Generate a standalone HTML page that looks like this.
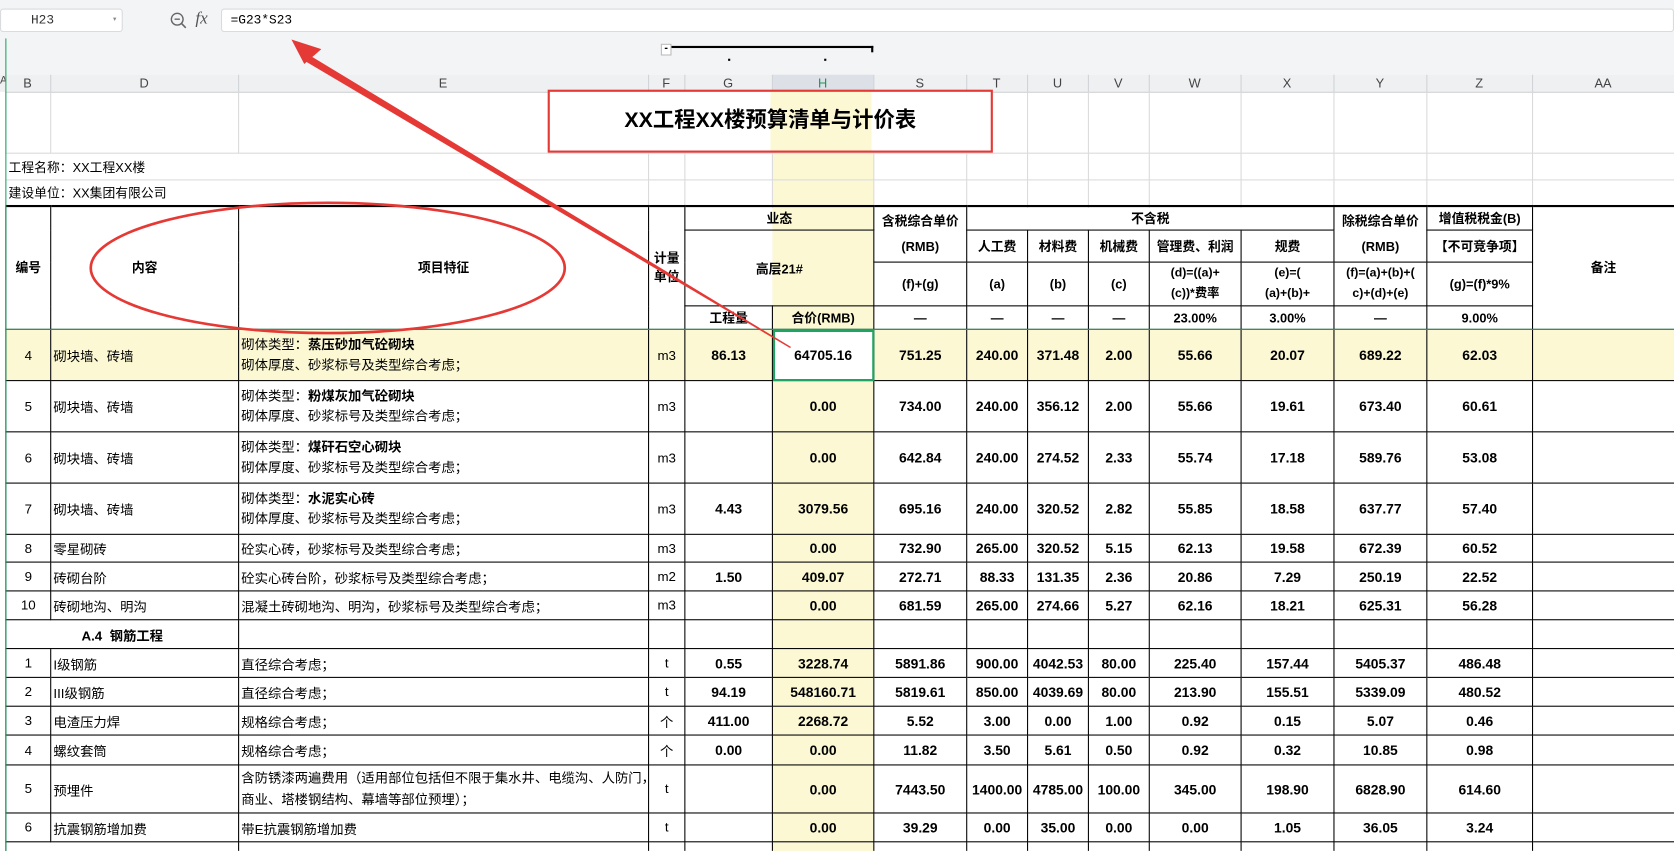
<!DOCTYPE html>
<html><head><meta charset="utf-8"><style>
*{box-sizing:border-box;margin:0;padding:0}
html,body{width:1674px;height:851px;overflow:hidden;background:#fff}
#w{position:absolute;left:0;top:0;width:1568px;height:797px;transform:scale(1.0676);transform-origin:0 0;font-family:"Liberation Sans","Noto Sans CJK SC",sans-serif;color:#000;font-size:12px;overflow:hidden}
.top{position:absolute;left:0;top:0;width:1568px;height:70px;background:#f3f4f6}
.nb{position:absolute;left:0;top:8px;width:115px;height:22px;background:#fff;border:1px solid #d9dbde;border-radius:3px;font-family:"Liberation Mono",monospace;font-size:12px;line-height:20px;padding-left:28px;color:#333}
.fb{position:absolute;left:207px;top:8px;width:1361px;height:22px;background:#fff;border:1px solid #d9dbde;border-radius:3px;font-family:"Liberation Mono",monospace;font-size:12px;line-height:20px;padding-left:8px}
table{border-collapse:collapse;table-layout:fixed;position:absolute;left:5px;width:1563px}
td{overflow:hidden;white-space:nowrap;text-align:center;vertical-align:middle;padding:0 2px}
#ch{top:70px;background:#eef0f2}
#ch td{height:16px;border-right:1px solid #d0d3d8;border-bottom:1px solid #c8ccd2;color:#444;font-size:12px}
#g{top:86px}
#g td{border:1px solid #dadada}
#g td.k{border:1px solid #000}
.y{background:#fbf8d3}
.l{text-align:left}
.b{font-weight:bold}
.n td{font-weight:bold;font-size:13px}
.n td.p{font-weight:normal;font-size:12.5px}
.r4 td{background:#fbf8d3}
</style></head><body><div id="w">
<div class="top">
<div class="nb">H23<span style="position:absolute;left:104px;top:0;font-size:8px;color:#888">▾</span></div>
<svg style="position:absolute;left:159px;top:11px" width="16" height="16"><circle cx="7" cy="7" r="5.5" fill="none" stroke="#666" stroke-width="1.3"/><line x1="4.5" y1="7" x2="9.5" y2="7" stroke="#666" stroke-width="1.3"/><line x1="11" y1="11" x2="15" y2="15" stroke="#666" stroke-width="1.5"/></svg>
<span style="position:absolute;left:183px;top:9px;font-family:'Liberation Serif',serif;font-style:italic;font-size:16px;color:#555">fx</span>
<div class="fb">=G23*S23</div>
<div style="position:absolute;left:619px;top:41px;width:10px;height:11px;background:#fff;border:1px solid #bbb;font-size:10px;line-height:7px;text-align:center;font-weight:bold">-</div>
<div style="position:absolute;left:629px;top:43px;width:189px;height:2px;background:#000"></div>
<div style="position:absolute;left:816px;top:43px;width:2px;height:6px;background:#000"></div>
<div style="position:absolute;left:682px;top:55px;width:2px;height:2px;background:#000"></div>
<div style="position:absolute;left:772px;top:55px;width:2px;height:2px;background:#000"></div>
</div>
<div style="position:absolute;left:0;top:70px;width:5px;height:16px;background:#eef0f2;font-size:10px;color:#444">A</div>
<table id="ch"><colgroup><col style="width:42px"><col style="width:176px"><col style="width:384px"><col style="width:34px"><col style="width:82px"><col style="width:95px"><col style="width:87px"><col style="width:57px"><col style="width:57px"><col style="width:57px"><col style="width:86px"><col style="width:87px"><col style="width:87px"><col style="width:99px"><col style="width:133px"></colgroup>
<tr><td>B</td><td>D</td><td>E</td><td>F</td><td>G</td><td style="background:#dde0e6;color:#1a9a5a">H</td><td>S</td><td>T</td><td>U</td><td>V</td><td>W</td><td>X</td><td>Y</td><td>Z</td><td>AA</td></tr></table>

<table id="g"><colgroup><col style="width:42px"><col style="width:176px"><col style="width:384px"><col style="width:34px"><col style="width:82px"><col style="width:95px"><col style="width:87px"><col style="width:57px"><col style="width:57px"><col style="width:57px"><col style="width:86px"><col style="width:87px"><col style="width:87px"><col style="width:99px"><col style="width:133px"></colgroup>
<tr style="height:57px"><td></td><td></td><td></td><td></td><td></td><td class="y"></td><td></td><td></td><td></td><td></td><td></td><td></td><td></td><td></td><td></td></tr>
<tr style="height:25px"><td colspan="3" class="l" style="border-left-color:#fff">工程名称：XX工程XX楼</td><td></td><td></td><td class="y"></td><td></td><td></td><td></td><td></td><td></td><td></td><td></td><td></td><td></td></tr>
<tr style="height:24px"><td colspan="3" class="l" style="border-left-color:#fff">建设单位：XX集团有限公司</td><td></td><td></td><td class="y"></td><td></td><td></td><td></td><td></td><td></td><td></td><td></td><td></td><td></td></tr>
<tr style="height:23px" class="b"><td class="k" rowspan="4" style="border-top:2px solid #000">编号</td><td class="k" rowspan="4" style="border-top:2px solid #000">内容</td><td class="k" rowspan="4" style="border-top:2px solid #000">项目特征</td><td class="k" rowspan="4" style="border-top:2px solid #000;white-space:normal;line-height:17px">计量单位</td><td class="k" colspan="2" style="border-top:2px solid #000;background:linear-gradient(90deg,#fff 46%,#fbf8d3 46%)">业态</td><td class="k" rowspan="2" style="border-top:2px solid #000;line-height:24px">含税综合单价<br>(RMB)</td><td class="k" colspan="5" style="border-top:2px solid #000">不含税</td><td class="k" rowspan="2" style="border-top:2px solid #000;line-height:24px">除税综合单价<br>(RMB)</td><td class="k" style="border-top:2px solid #000">增值税税金(B)</td><td class="k" rowspan="4" style="border-top:2px solid #000">备注</td></tr>
<tr style="height:30px" class="b"><td class="k" colspan="2" rowspan="2" style="background:linear-gradient(90deg,#fff 46%,#fbf8d3 46%)">高层21#</td><td class="k">人工费</td><td class="k">材料费</td><td class="k">机械费</td><td class="k">管理费、利润</td><td class="k">规费</td><td class="k">【不可竞争项】</td></tr>
<tr style="height:41px" class="b"><td class="k">(f)+(g)</td><td class="k">(a)</td><td class="k">(b)</td><td class="k">(c)</td><td class="k" style="line-height:19px;font-size:11.5px">(d)=((a)+<br>(c))*费率</td><td class="k" style="line-height:19px;font-size:11.5px">(e)=(<br>(a)+(b)+</td><td class="k" style="line-height:19px;font-size:11.5px">(f)=(a)+(b)+(<br>c)+(d)+(e)</td><td class="k">(g)=(f)*9%</td></tr>
<tr style="height:22px" class="b"><td class="k">工程量</td><td class="k y">合价(RMB)</td><td class="k">—</td><td class="k">—</td><td class="k">—</td><td class="k">—</td><td class="k">23.00%</td><td class="k">3.00%</td><td class="k">—</td><td class="k">9.00%</td></tr>
<tr style="height:48px" class="n r4"><td class="k p">4</td><td class="k p l">砌块墙、砖墙</td><td class="k p l" style="line-height:19px">砌体类型：<b>蒸压砂加气砼砌块</b><br>砌体厚度、砂浆标号及类型综合考虑；</td><td class="k p">m3</td><td class="k">86.13</td><td class="k" style="background:#fff;outline:2px solid #1fa463;outline-offset:-2px">64705.16</td><td class="k">751.25</td><td class="k">240.00</td><td class="k">371.48</td><td class="k">2.00</td><td class="k">55.66</td><td class="k">20.07</td><td class="k">689.22</td><td class="k">62.03</td><td class="k"></td></tr>
<tr style="height:48px" class="n"><td class="k p">5</td><td class="k p l">砌块墙、砖墙</td><td class="k p l" style="line-height:19px">砌体类型：<b>粉煤灰加气砼砌块</b><br>砌体厚度、砂浆标号及类型综合考虑；</td><td class="k p">m3</td><td class="k"></td><td class="k y">0.00</td><td class="k">734.00</td><td class="k">240.00</td><td class="k">356.12</td><td class="k">2.00</td><td class="k">55.66</td><td class="k">19.61</td><td class="k">673.40</td><td class="k">60.61</td><td class="k"></td></tr>
<tr style="height:48px" class="n"><td class="k p">6</td><td class="k p l">砌块墙、砖墙</td><td class="k p l" style="line-height:19px">砌体类型：<b>煤矸石空心砌块</b><br>砌体厚度、砂浆标号及类型综合考虑；</td><td class="k p">m3</td><td class="k"></td><td class="k y">0.00</td><td class="k">642.84</td><td class="k">240.00</td><td class="k">274.52</td><td class="k">2.33</td><td class="k">55.74</td><td class="k">17.18</td><td class="k">589.76</td><td class="k">53.08</td><td class="k"></td></tr>
<tr style="height:48px" class="n"><td class="k p">7</td><td class="k p l">砌块墙、砖墙</td><td class="k p l" style="line-height:19px">砌体类型：<b>水泥实心砖</b><br>砌体厚度、砂浆标号及类型综合考虑；</td><td class="k p">m3</td><td class="k">4.43</td><td class="k y">3079.56</td><td class="k">695.16</td><td class="k">240.00</td><td class="k">320.52</td><td class="k">2.82</td><td class="k">55.85</td><td class="k">18.58</td><td class="k">637.77</td><td class="k">57.40</td><td class="k"></td></tr>
<tr style="height:26px" class="n"><td class="k p">8</td><td class="k p l">零星砌砖</td><td class="k p l">砼实心砖，砂浆标号及类型综合考虑；</td><td class="k p">m3</td><td class="k"></td><td class="k y">0.00</td><td class="k">732.90</td><td class="k">265.00</td><td class="k">320.52</td><td class="k">5.15</td><td class="k">62.13</td><td class="k">19.58</td><td class="k">672.39</td><td class="k">60.52</td><td class="k"></td></tr>
<tr style="height:27px" class="n"><td class="k p">9</td><td class="k p l">砖砌台阶</td><td class="k p l">砼实心砖台阶，砂浆标号及类型综合考虑；</td><td class="k p">m2</td><td class="k">1.50</td><td class="k y">409.07</td><td class="k">272.71</td><td class="k">88.33</td><td class="k">131.35</td><td class="k">2.36</td><td class="k">20.86</td><td class="k">7.29</td><td class="k">250.19</td><td class="k">22.52</td><td class="k"></td></tr>
<tr style="height:27px" class="n"><td class="k p">10</td><td class="k p l">砖砌地沟、明沟</td><td class="k p l">混凝土砖砌地沟、明沟，砂浆标号及类型综合考虑；</td><td class="k p">m3</td><td class="k"></td><td class="k y">0.00</td><td class="k">681.59</td><td class="k">265.00</td><td class="k">274.66</td><td class="k">5.27</td><td class="k">62.16</td><td class="k">18.21</td><td class="k">625.31</td><td class="k">56.28</td><td class="k"></td></tr>
<tr style="height:27px" class="n"><td class="k" colspan="2" style="font-size:12.5px">A.4&nbsp; 钢筋工程</td><td class="k"></td><td class="k"></td><td class="k"></td><td class="k y"></td><td class="k"></td><td class="k"></td><td class="k"></td><td class="k"></td><td class="k"></td><td class="k"></td><td class="k"></td><td class="k"></td><td class="k"></td></tr>
<tr style="height:27px" class="n"><td class="k p" style="border-bottom:1px dashed #666">1</td><td class="k p l" style="border-bottom:1px dashed #666">I级钢筋</td><td class="k p l" style="border-bottom:1px dashed #666">直径综合考虑；</td><td class="k p" style="border-bottom:1px dashed #666">t</td><td class="k" style="border-bottom:1px dashed #666">0.55</td><td class="k y" style="border-bottom:1px dashed #666">3228.74</td><td class="k" style="border-bottom:1px dashed #666">5891.86</td><td class="k" style="border-bottom:1px dashed #666">900.00</td><td class="k" style="border-bottom:1px dashed #666">4042.53</td><td class="k" style="border-bottom:1px dashed #666">80.00</td><td class="k" style="border-bottom:1px dashed #666">225.40</td><td class="k" style="border-bottom:1px dashed #666">157.44</td><td class="k" style="border-bottom:1px dashed #666">5405.37</td><td class="k" style="border-bottom:1px dashed #666">486.48</td><td class="k" style="border-bottom:1px dashed #666"></td></tr>
<tr style="height:27px" class="n"><td class="k p">2</td><td class="k p l">III级钢筋</td><td class="k p l">直径综合考虑；</td><td class="k p">t</td><td class="k">94.19</td><td class="k y">548160.71</td><td class="k">5819.61</td><td class="k">850.00</td><td class="k">4039.69</td><td class="k">80.00</td><td class="k">213.90</td><td class="k">155.51</td><td class="k">5339.09</td><td class="k">480.52</td><td class="k"></td></tr>
<tr style="height:27px" class="n"><td class="k p">3</td><td class="k p l">电渣压力焊</td><td class="k p l">规格综合考虑；</td><td class="k p">个</td><td class="k">411.00</td><td class="k y">2268.72</td><td class="k">5.52</td><td class="k">3.00</td><td class="k">0.00</td><td class="k">1.00</td><td class="k">0.92</td><td class="k">0.15</td><td class="k">5.07</td><td class="k">0.46</td><td class="k"></td></tr>
<tr style="height:28px" class="n"><td class="k p">4</td><td class="k p l">螺纹套筒</td><td class="k p l">规格综合考虑；</td><td class="k p">个</td><td class="k">0.00</td><td class="k y">0.00</td><td class="k">11.82</td><td class="k">3.50</td><td class="k">5.61</td><td class="k">0.50</td><td class="k">0.92</td><td class="k">0.32</td><td class="k">10.85</td><td class="k">0.98</td><td class="k"></td></tr>
<tr style="height:45px" class="n"><td class="k p">5</td><td class="k p l">预埋件</td><td class="k p l" style="line-height:20px">含防锈漆两遍费用（适用部位包括但不限于集水井、电缆沟、人防门，<br>商业、塔楼钢结构、幕墙等部位预埋）；</td><td class="k p">t</td><td class="k"></td><td class="k y">0.00</td><td class="k">7443.50</td><td class="k">1400.00</td><td class="k">4785.00</td><td class="k">100.00</td><td class="k">345.00</td><td class="k">198.90</td><td class="k">6828.90</td><td class="k">614.60</td><td class="k"></td></tr>
<tr style="height:27px" class="n"><td class="k p">6</td><td class="k p l">抗震钢筋增加费</td><td class="k p l">带E抗震钢筋增加费</td><td class="k p">t</td><td class="k"></td><td class="k y">0.00</td><td class="k">39.29</td><td class="k">0.00</td><td class="k">35.00</td><td class="k">0.00</td><td class="k">0.00</td><td class="k">1.05</td><td class="k">36.05</td><td class="k">3.24</td><td class="k"></td></tr>
<tr style="height:20px" class="n"><td class="k" colspan="2" style="vertical-align:top;font-size:12.5px;padding-top:4px">A.5&nbsp; 混凝土工程</td><td class="k"></td><td class="k"></td><td class="k"></td><td class="k y"></td><td class="k"></td><td class="k"></td><td class="k"></td><td class="k"></td><td class="k"></td><td class="k"></td><td class="k"></td><td class="k"></td><td class="k"></td></tr>
</table>
<div style="position:absolute;left:5px;top:36px;width:1px;height:761px;background:#1fa463"></div>
<div style="position:absolute;left:5px;top:308px;width:1563px;height:1px;background:#1fa463"></div>
<div style="position:absolute;left:513px;top:84px;width:417px;height:59px;border:2px solid #e53935;font-size:20px;font-weight:bold;text-align:center;line-height:55px;background:linear-gradient(90deg,#fff 50%,#fbf8d3 50%,#fbf8d3 73%,#fff 73%)">XX工程XX楼预算清单与计价表</div>
<svg style="position:absolute;left:0;top:0" width="1568" height="797">
<ellipse cx="307" cy="251" rx="222" ry="61" fill="none" stroke="#e53935" stroke-width="2.5"/>
<polygon points="740,326 741,325 292,53 287,58" fill="#e53935"/>
<polygon points="273,37 301,46 285,60" fill="#e53935"/>
</svg>
</div></body></html>
